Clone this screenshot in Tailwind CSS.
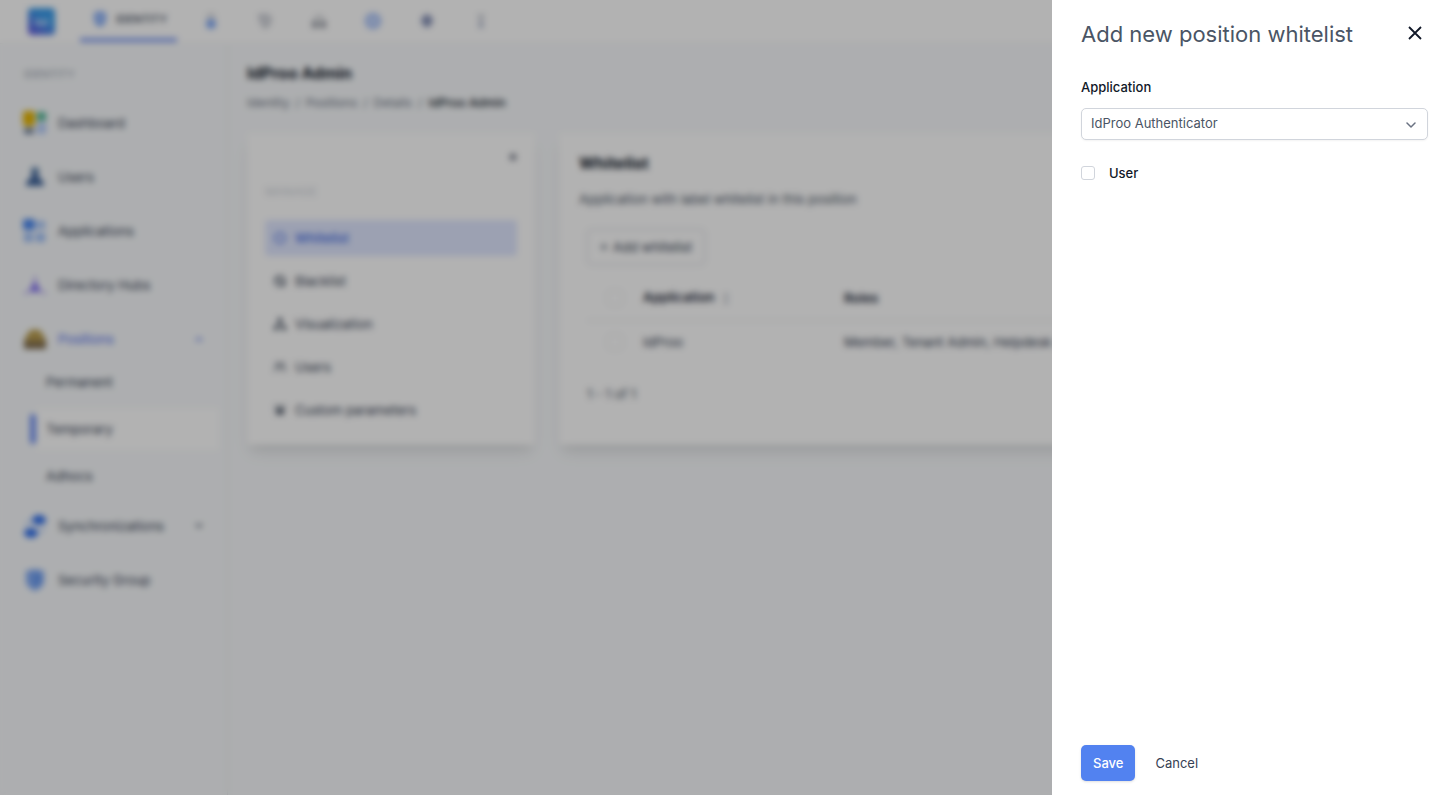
<!DOCTYPE html>
<html lang="en">
<head>
    <meta charset="UTF-8">
    <meta name="viewport" content="width=device-width, initial-scale=1.0">
    <title>IdProo Admin - Whitelist</title>
    <script src="https://cdn.jsdelivr.net/npm/@tailwindcss/browser@4"></script>
</head>
<body class="h-screen overflow-hidden bg-slate-50 font-['Inter',sans-serif] text-[13px] leading-5 text-gray-700">
    <div class="flex h-full flex-col">
        <!-- Top bar -->
        <header class="flex h-11 shrink-0 items-center border-b border-gray-100 bg-white pb-px pl-7">
            <a href="#" aria-label="IdProo" class="mr-[25px]">
                <svg class="size-[27px]" viewBox="0 0 27 27">
                    <defs>
                        <linearGradient id="logo" x1="0" y1="1" x2="0.5" y2="0.3">
                            <stop offset="0" stop-color="#6a55dc"/>
                            <stop offset="1" stop-color="#3a9bea"/>
                        </linearGradient>
                    </defs>
                    <rect width="27" height="27" rx="4" fill="url(#logo)"/>
                    <path d="M8 11v3a2 2 0 0 0 2 2h7a2 2 0 0 0 2-2v-3M11 13h5" fill="none" stroke="#cfe6ff" stroke-width="2"/>
                </svg>
            </a>
            <nav class="flex h-full items-center">
                <a href="#" class="flex h-full w-[97px] items-center gap-2 border-b-4 border-[#7f9bf3] pl-3 text-[11px] font-medium text-gray-700">
                    <svg class="size-4" viewBox="0 0 16 16"><path d="M8 0l6 2v6c0 4-3 6.500-6 8-3-1.500-6-4-6-8V2z" fill="#7fa8f6"/><circle cx="8" cy="7" r="3" fill="#b4cdff"/></svg>
                    IDENTITY
                </a>
                <a href="#" aria-label="Access" class="ml-[26px] mr-[38px]">
                    <svg class="size-4" viewBox="0 0 16 16"><path d="M5 7V4a3 3 0 0 1 6 0v3" fill="none" stroke="#b6bac2" stroke-width="1.500"/><circle cx="8" cy="11" r="5" fill="#7fa8f6"/></svg>
                </a>
                <a href="#" aria-label="Tags" class="mr-[38px]">
                    <svg class="size-4" viewBox="0 0 16 16"><path d="M2 2h9l3 4-2 6-4 3-4-5z" fill="#d8dae0" stroke="#b4b8c2" stroke-width="1.500"/></svg>
                </a>
                <a href="#" aria-label="Teams" class="mr-[38px]">
                    <svg class="size-4" viewBox="0 0 16 16"><path d="M4 7a4 4 0 0 1 8 0" fill="none" stroke="#a3a7b0" stroke-width="1.500"/><path d="M1 8h6v7H1zM9 8h6v7H9z" fill="#9b9fa8"/></svg>
                </a>
                <a href="#" aria-label="Sync" class="mr-[38px]">
                    <svg class="size-4" viewBox="0 0 16 16"><circle cx="8" cy="8" r="7" fill="#c3d5fb" stroke="#8fb0f6" stroke-width="2"/></svg>
                </a>
                <a href="#" aria-label="Settings" class="mr-[38px]">
                    <svg class="size-4" viewBox="0 0 16 16"><path d="M8 1l5 3v7l-5 4-5-4V4z" fill="#8490b8"/><path d="M1 8h14M8 1v14" stroke="#8d97b8" stroke-width="1"/></svg>
                </a>
                <a href="#" aria-label="Info">
                    <svg class="size-4" viewBox="0 0 16 16"><path d="M5 2h6l-2 4v8H7V6z" fill="#d5d8e0" stroke="#b3b8c4" stroke-width="1"/><path d="M6 10h4v5H6z" fill="#a3adc8"/></svg>
                </a>
            </nav>
        </header>

        <div class="flex min-h-0 flex-1">
            <!-- Sidebar -->
            <aside class="w-[228px] shrink-0 border-r border-gray-200 pt-5">
                <p class="pl-6 text-[11px] text-gray-400">IDENTITY</p>
                <nav class="mt-3">
                    <a href="#" class="flex h-[54px] items-center gap-[11px] pl-[23px]">
                        <svg class="size-6" viewBox="0 0 24 24"><rect width="12" height="15" rx="2" fill="#e5b400"/><rect x="14" y="1" width="9" height="9" rx="2" fill="#4fb595"/><rect x="1" y="17" width="10" height="6" rx="2" fill="#6c7d98"/><rect x="14" y="12" width="9" height="11" rx="2" fill="#b5cdfb"/></svg>
                        Dashboard
                    </a>
                    <a href="#" class="flex h-[54px] items-center gap-[11px] pl-[23px]">
                        <svg class="size-6" viewBox="0 0 24 24"><circle cx="12" cy="6" r="4" fill="#5a7fab"/><path d="M9 8h6l1 5c3 1 5 4 5 8H3c0-4 2-7 5-8z" fill="#3f649b"/></svg>
                        Users
                    </a>
                    <a href="#" class="flex h-[54px] items-center gap-[11px] pl-[23px]">
                        <svg class="size-6" viewBox="0 0 24 24"><rect width="12" height="11" rx="2" fill="#4a88f0"/><rect x="14" y="2" width="8" height="8" fill="#a3c4fb"/><rect x="1" y="14" width="9" height="9" fill="#9dbff9"/><rect x="13" y="14" width="9" height="9" fill="#9dbff9"/></svg>
                        Applications
                    </a>
                    <a href="#" class="flex h-[54px] items-center gap-[11px] pl-[23px]">
                        <svg class="size-6" viewBox="0 0 24 24"><path d="M12 3v5M6 18l-5 3M18 18l5 3" stroke="#a99cf5" stroke-width="2"/><path d="M12 7l6 12H6z" fill="#7f6df1"/></svg>
                        Directory Hubs
                    </a>
                    <a href="#" class="flex h-[54px] items-center gap-[11px] pl-[23px] text-[#4f6bea]">
                        <svg class="size-6" viewBox="0 0 24 24"><path d="M1 13L6 4l6-2 6 2 5 9v3H1z" fill="#bb9f50"/><path d="M1 13h22v9H1z" fill="#7d6a4c"/><path d="M2 15h20" stroke="#d8b35a" stroke-width="1"/></svg>
                        <span class="flex-1">Positions</span>
                        <svg class="mr-6 size-2" viewBox="0 0 8 8"><path d="M1 6l3-3 3 3" fill="none" stroke="currentColor" stroke-width="1.500"/></svg>
                    </a>
                    <a href="#" class="-mt-2 flex h-[47px] items-center pl-[46px]">Permanent</a>
                    <a href="#" class="flex h-[47px] items-center pl-[30px] pr-2">
                        <span class="h-[30px] w-[6px] shrink-0 rounded bg-[#7090f2]"></span>
                        <span class="flex h-[42px] flex-1 items-center rounded bg-white pl-[10px]">Temporary</span>
                    </a>
                    <a href="#" class="flex h-[47px] items-center pl-[46px]">Adhocs</a>
                    <a href="#" class="flex h-[54px] items-center gap-[11px] pl-[23px]">
                        <svg class="size-6" viewBox="0 0 24 24"><ellipse cx="16" cy="6" rx="7" ry="5" fill="#2f6fec"/><ellipse cx="8" cy="19" rx="7" ry="5" fill="#2f6fec"/><path d="M3 11l4-5M21 14l-3 5" stroke="#9fc0fa" stroke-width="2"/></svg>
                        <span class="flex-1">Synchronizations</span>
                        <svg class="mr-6 size-2" viewBox="0 0 8 8"><path d="M1 2l3 3 3-3" fill="none" stroke="currentColor" stroke-width="1.500"/></svg>
                    </a>
                    <a href="#" class="flex h-[54px] items-center gap-[11px] pl-[23px]">
                        <svg class="size-6" viewBox="0 0 24 24"><path d="M3 3l9-2 9 2v10c0 5-5 8-9 10-4-2-9-5-9-10z" fill="#7fa9f5"/><path d="M12 5l5 2v5c0 3-2 5-5 7z" fill="#5f94ec"/></svg>
                        Security Group
                    </a>
                </nav>
            </aside>

            <!-- Content -->
            <main class="min-w-0 flex-1 px-[19px] pt-[17px]">
                <h1 class="text-[16px] font-bold leading-6 text-gray-900">IdProo Admin</h1>
                <nav aria-label="Breadcrumb" class="mt-2 flex gap-[6px] text-[12px] text-gray-500">
                    <a href="#">Identity</a><span>/</span>
                    <a href="#">Positions</a><span>/</span>
                    <a href="#">Details</a><span>/</span>
                    <span class="font-medium text-gray-900">IdProo Admin</span>
                </nav>

                <div class="mt-5 flex gap-6">
                    <section class="h-[312px] w-[288px] shrink-0 rounded bg-white px-[18px] pt-5 shadow-lg">
                        <div class="flex justify-end">
                            <button type="button" aria-label="Collapse">
                                <svg class="block size-2" viewBox="0 0 8 8"><circle cx="4" cy="4" r="3.500" fill="#858a96"/></svg>
                            </button>
                        </div>
                        <p class="mt-[21px] text-[12px] text-gray-300">MANAGE</p>
                        <nav class="mt-[18px] flex flex-col gap-[7px]">
                            <a href="#" class="flex h-9 items-center gap-2 rounded bg-indigo-100 pl-2 font-medium text-[#4169e1]">
                                <svg class="size-[14px]" viewBox="0 0 14 14"><circle cx="7" cy="7" r="5" fill="none" stroke="currentColor" stroke-width="1.500"/></svg>
                                Whitelist
                            </a>
                            <a href="#" class="flex h-9 items-center gap-2 pl-2">
                                <svg class="size-[14px]" viewBox="0 0 14 14"><circle cx="7" cy="7" r="5" fill="none" stroke="currentColor" stroke-width="1.500"/><path d="M4 4l8 8" stroke="currentColor" stroke-width="1.500"/></svg>
                                Blacklist
                            </a>
                            <a href="#" class="flex h-9 items-center gap-2 pl-2">
                                <svg class="size-[14px]" viewBox="0 0 14 14"><path d="M7 4v4M3 10l4-3 4 3" fill="none" stroke="currentColor" stroke-width="1.500"/><path d="M5 1h4v4H5zM1 9h4v4H1zM9 9h4v4H9z" fill="currentColor"/></svg>
                                Visualization
                            </a>
                            <a href="#" class="flex h-9 items-center gap-2 pl-2">
                                <svg class="size-[14px]" viewBox="0 0 14 14"><path d="M1 12c0-6 7-6 7 0M9 8c3-1 4 1 4 4" fill="none" stroke="currentColor" stroke-width="1"/><circle cx="4.500" cy="4.500" r="2" fill="none" stroke="currentColor" stroke-width="1"/><circle cx="9.500" cy="4.500" r="2" fill="none" stroke="currentColor" stroke-width="1"/></svg>
                                Users
                            </a>
                            <a href="#" class="flex h-9 items-center gap-2 pl-2">
                                <svg class="size-[14px]" viewBox="0 0 14 14"><path d="M1 3h12M1 7h12M2 11h10" stroke="currentColor" stroke-width="1"/><circle cx="7" cy="8" r="3" fill="currentColor"/></svg>
                                Custom parameters
                            </a>
                        </nav>
                    </section>

                    <section class="h-[312px] min-w-0 flex-1 rounded bg-white px-5 pt-5 shadow-lg">
                        <h2 class="text-[16px] font-bold text-gray-900">Whitelist</h2>
                        <p class="mt-4 text-gray-600">Application with label whitelist in this position</p>
                        <div class="px-2">
                            <button type="button" class="mt-5 flex h-9 items-center gap-[5px] rounded border border-gray-300 px-3 text-gray-700">
                                <svg class="size-2" viewBox="0 0 8 8"><path d="M4 0v8M0 4h8" stroke="currentColor" stroke-width="1"/></svg>
                                Add whitelist
                            </button>
                            <table class="mt-[11px] w-full table-fixed text-left">
                                <thead class="border-b border-gray-200 text-gray-800">
                                    <tr class="h-11">
                                        <th class="w-[56px] pl-5"><input type="checkbox" aria-label="Select all" class="block size-4 appearance-none rounded border border-gray-200"></th>
                                        <th class="w-[201px] font-semibold">Application <span class="ml-1 text-[10px] font-normal text-gray-400">↕</span></th>
                                        <th class="font-semibold">Roles</th>
                                    </tr>
                                </thead>
                                <tbody>
                                    <tr class="h-11">
                                        <td class="pl-5"><input type="checkbox" aria-label="Select IdProo" class="block size-4 appearance-none rounded border border-gray-200"></td>
                                        <td>IdProo</td>
                                        <td class="truncate">Member, Tenant Admin, Helpdesk Admin</td>
                                    </tr>
                                </tbody>
                            </table>
                            <p class="mt-5 text-gray-600">1 - 1 of 1</p>
                        </div>
                    </section>
                </div>
            </main>
        </div>
    </div>

    <!-- Drawer -->
    <div class="fixed inset-0 flex justify-end bg-black/30 backdrop-blur-[3px]">
        <form class="flex h-full w-[402px] flex-col bg-white pb-[14px] pl-[29px] pr-[26px] pt-5" role="dialog" aria-labelledby="drawer-title">
            <div class="flex items-start justify-between">
                <h2 id="drawer-title" class="text-[22px] leading-7 text-gray-600">Add new position whitelist</h2>
                <button type="button" aria-label="Close" class="p-[5px] text-gray-900">
                    <svg class="size-4" viewBox="0 0 16 16"><path d="M2 2l12 12M14 2L2 14" fill="none" stroke="currentColor" stroke-width="1.800"/></svg>
                </button>
            </div>
            <label for="application" class="mt-[29px] font-medium text-gray-900">Application</label>
            <div class="relative mt-[11px]">
                <select id="application" class="block h-8 w-full appearance-none rounded-[5px] border border-gray-300 bg-white pb-[2px] pl-[9px] pr-8 text-[13px] text-gray-600 shadow-xs">
                    <option>IdProo Authenticator</option>
                </select>
                <svg class="pointer-events-none absolute right-3 top-3 size-[10px] text-gray-500" viewBox="0 0 10 10"><path d="M1 3l4 4 4-4" fill="none" stroke="currentColor" stroke-width="1.500" stroke-linecap="round" stroke-linejoin="round"/></svg>
            </div>
            <div class="mt-[23px] flex items-center">
                <input id="role-user" type="checkbox" class="size-[14px] appearance-none rounded-[3px] border border-gray-300 bg-white">
                <label for="role-user" class="pl-[14px] font-medium text-gray-900">User</label>
            </div>
            <div class="mt-auto flex items-center gap-2">
                <button type="submit" class="h-9 rounded-[5px] bg-[#5282f0] px-3 font-medium text-white shadow-sm">Save</button>
                <button type="button" class="h-9 px-3 text-gray-700">Cancel</button>
            </div>
        </form>
    </div>
</body>
</html>
